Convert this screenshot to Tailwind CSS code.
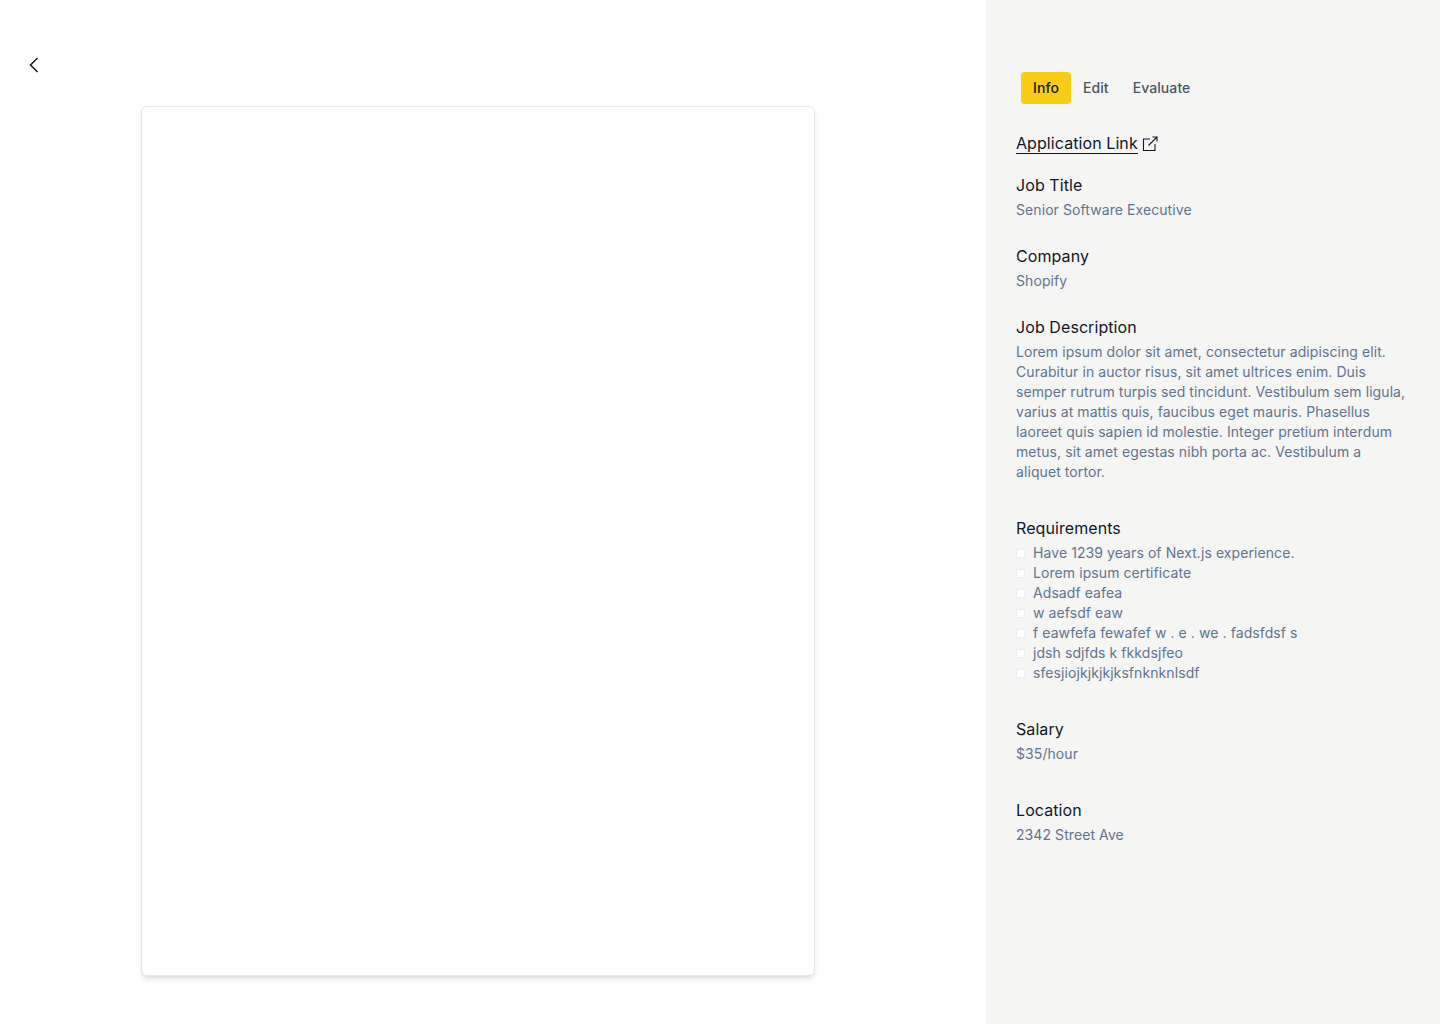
<!DOCTYPE html>
<html lang="en">
<head>
  <meta charset="UTF-8">
  <meta name="viewport" content="width=device-width, initial-scale=1.0">
  <title>Application</title>
  <script src="https://cdn.jsdelivr.net/npm/@tailwindcss/browser@4"></script>
</head>
<body class="bg-white font-['Inter',sans-serif] antialiased tracking-[0.08px]">
  <div class="flex h-[1024px] overflow-hidden">
    <!-- left: preview -->
    <main class="w-[986px] shrink-0 pt-[56px]">
      <button class="block ml-[24px] w-[18px] h-[18px] text-gray-900">
        <svg class="w-[18px] h-[18px]" viewBox="0 0 18 18" fill="none" stroke="currentColor" stroke-width="1.5"><path d="M13.5 2 6.5 9l7 7"/></svg>
      </button>
      <div class="ml-[141px] mt-[32px] w-[674px] h-[870px] bg-white border border-gray-200 rounded-md shadow-md"></div>
    </main>

    <!-- right: info panel -->
    <aside class="flex-1 bg-[#f5f5f4] pl-[30px] pr-[32px] pt-[72px]">
      <nav class="flex ml-[5px] text-sm font-medium">
        <a class="px-3 h-8 leading-8 rounded-sm bg-[#facc15] text-gray-900">Info</a>
        <a class="px-3 h-8 leading-8 text-gray-600">Edit</a>
        <a class="px-3 h-8 leading-8 text-gray-600">Evaluate</a>
      </nav>

      <div class="mt-[29px] flex items-center gap-1 text-gray-900">
        <a class="border-b border-gray-900 leading-[20px] text-base">Application Link</a>
        <svg class="w-4 h-4" viewBox="0 0 16 16" fill="none" stroke="currentColor" stroke-width="1.1"><path d="M8 3H1.5v11.5H13V8"/><path d="M6.5 9.5 15 1M10.5 1H15v4.5"/></svg>
      </div>

      <section class="mt-[19px]">
        <h3 class="text-base leading-6 text-gray-900">Job Title</h3>
        <p class="mt-[3px] text-sm leading-5 text-slate-500">Senior Software Executive</p>
      </section>

      <section class="mt-[24px]">
        <h3 class="text-base leading-6 text-gray-900">Company</h3>
        <p class="mt-[3px] text-sm leading-5 text-slate-500">Shopify</p>
      </section>

      <section class="mt-[24px]">
        <h3 class="text-base leading-6 text-gray-900">Job Description</h3>
        <p class="mt-[3px] text-sm leading-5 text-slate-500">Lorem ipsum dolor sit amet, consectetur adipiscing elit. Curabitur in auctor risus, sit amet ultrices enim. Duis semper rutrum turpis sed tincidunt. Vestibulum sem ligula, varius at mattis quis, faucibus eget mauris. Phasellus laoreet quis sapien id molestie. Integer pretium interdum metus, sit amet egestas nibh porta ac. Vestibulum a aliquet tortor.</p>
      </section>

      <section class="mt-[34px]">
        <h3 class="text-base leading-6 text-gray-900">Requirements</h3>
        <ul class="mt-[3px] text-sm leading-5 text-slate-500">
          <li class="flex items-center gap-2"><span class="w-[9px] h-[9px] bg-white border border-gray-200/70 rounded-[1px]"></span>Have 1239 years of Next.js experience.</li>
          <li class="flex items-center gap-2"><span class="w-[9px] h-[9px] bg-white border border-gray-200/70 rounded-[1px]"></span>Lorem ipsum certificate</li>
          <li class="flex items-center gap-2"><span class="w-[9px] h-[9px] bg-white border border-gray-200/70 rounded-[1px]"></span>Adsadf eafea</li>
          <li class="flex items-center gap-2"><span class="w-[9px] h-[9px] bg-white border border-gray-200/70 rounded-[1px]"></span>w aefsdf eaw</li>
          <li class="flex items-center gap-2"><span class="w-[9px] h-[9px] bg-white border border-gray-200/70 rounded-[1px]"></span>f eawfefa fewafef w . e . we . fadsfdsf s</li>
          <li class="flex items-center gap-2"><span class="w-[9px] h-[9px] bg-white border border-gray-200/70 rounded-[1px]"></span>jdsh sdjfds k fkkdsjfeo</li>
          <li class="flex items-center gap-2"><span class="w-[9px] h-[9px] bg-white border border-gray-200/70 rounded-[1px]"></span>sfesjiojkjkjkjksfnknknlsdf</li>
        </ul>
      </section>

      <section class="mt-[34px]">
        <h3 class="text-base leading-6 text-gray-900">Salary</h3>
        <p class="mt-[3px] text-sm leading-5 text-slate-500">$35/hour</p>
      </section>

      <section class="mt-[34px]">
        <h3 class="text-base leading-6 text-gray-900">Location</h3>
        <p class="mt-[3px] text-sm leading-5 text-slate-500">2342 Street Ave</p>
      </section>
    </aside>
  </div>
</body>
</html>
